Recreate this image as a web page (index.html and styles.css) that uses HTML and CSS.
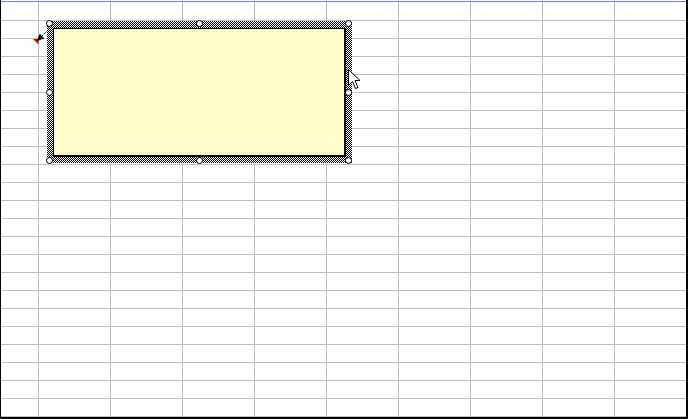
FILE: index.html
```html
<!DOCTYPE html>
<html>
<head>
<meta charset="utf-8">
<link rel="stylesheet" href="styles.css">
</head>
<body>
<div class="frame">
  <div class="topline"></div>
  <div class="grid">
    <div class="rows"></div>

    <svg class="pointer" width="26" height="22" viewBox="30 25 26 22">
      <polygon points="33,39 38.5,39 38.5,44.5" fill="#ff0000"/>
      <line x1="42" y1="36" x2="51" y2="27" stroke="#000" stroke-width="1" stroke-dasharray="1.4 1"/>
      <polygon points="36.5,41.5 39.8,33.8 44.2,38.2" fill="#000"/>
    </svg>

    <div class="note">
      <div class="note-box"></div>
      <span class="handle h-tl"></span>
      <span class="handle h-tc"></span>
      <span class="handle h-tr"></span>
      <span class="handle h-ml"></span>
      <span class="handle h-mr"></span>
      <span class="handle h-bl"></span>
      <span class="handle h-bc"></span>
      <span class="handle h-br"></span>
    </div>

    <svg class="cursor" width="14" height="22" viewBox="0 0 14 22">
      <path d="M0.5 0.5 V16.5 L4.5 12.5 L7.5 19.5 L10 18.5 L7 11.5 H12 Z" fill="#fff" stroke="#000" stroke-width="1" stroke-linejoin="miter"/>
    </svg>
  </div>
</div>
</body>
</html>
```

FILE: styles.css
```css
* { box-sizing: border-box; }

html, body {
  margin: 0;
  padding: 0;
  background: #ffffff;
  font-family: "Liberation Sans", Arial, sans-serif;
}

.frame {
  width: 688px;
  height: 419px;
  border-left: 1px solid #000;
  border-right: 2px solid #000;
  border-bottom: 2px solid #000;
  padding-top: 1px;
  display: flex;
  flex-direction: column;
  background: #fff;
}

.topline {
  height: 1px;
  background: #7080c8;
  flex: none;
}

.grid {
  position: relative;
  flex: 1;
  padding-top: 18px;
  display: flex;
  flex-direction: column;
  background-image: linear-gradient(to right, #c0c0c0 1px, transparent 1px);
  background-size: 72px 100%;
  background-position: 37px 0;
  background-repeat: repeat-x;
}

.rows {
  flex: 1;
  background-image: linear-gradient(to bottom, #c0c0c0 1px, transparent 1px);
  background-size: 100% 18px;
  background-position: 0 0;
  background-repeat: repeat-y;
}

.pointer {
  position: absolute;
  left: 29px;
  top: 23px;
  overflow: visible;
}

.note {
  position: absolute;
  left: 46px;
  top: 19px;
  width: 305px;
  height: 142px;
  padding: 7px 6px 6px 6px;
  background: repeating-conic-gradient(#000 0% 25%, #fff 0% 50%) 0 0 / 2px 2px;
}

.note-box {
  width: 100%;
  height: 100%;
  background: #ffffcc;
  border-top: 1px solid #000;
  border-left: 1px solid #000;
  border-right: 2px solid #000;
  border-bottom: 2px solid #000;
}

.handle {
  position: absolute;
  width: 7px;
  height: 7px;
  border: 1px solid #000;
  border-radius: 50%;
  background: #fff;
}

.h-tl { left: -1px; top: -1px; }
.h-tc { left: 149px; top: -1px; }
.h-tr { left: 298px; top: -1px; }
.h-ml { left: -1px; top: 68px; }
.h-mr { left: 298px; top: 68px; }
.h-bl { left: -1px; top: 136px; }
.h-bc { left: 149px; top: 136px; }
.h-br { left: 298px; top: 136px; }

.cursor {
  position: absolute;
  left: 347px;
  top: 67px;
}
```
